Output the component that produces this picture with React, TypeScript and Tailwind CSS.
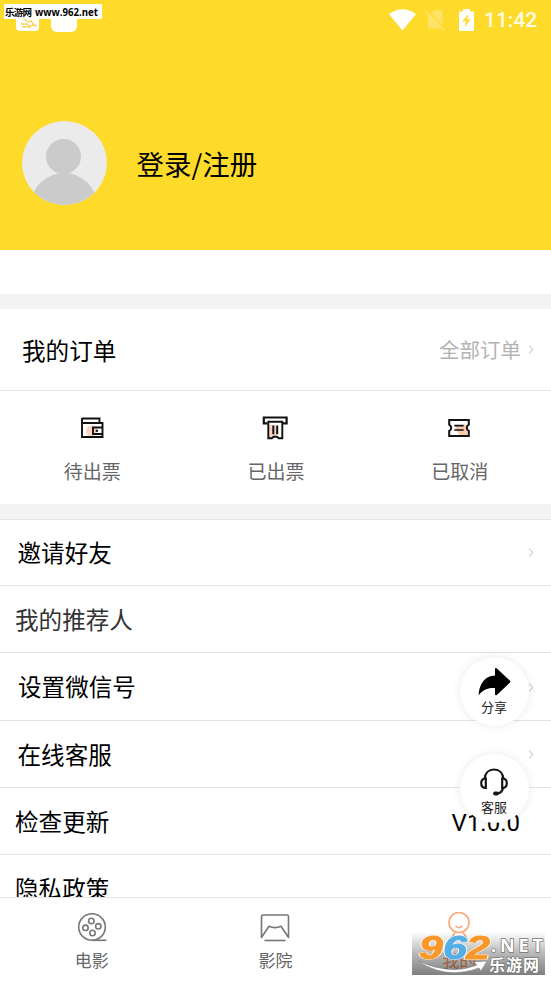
import React from 'react';

const WalletIcon = () => (
  <svg width="24" height="22" viewBox="0 0 24 22" fill="none">
    <circle cx="11.5" cy="14" r="5.5" fill="#fcd5c2" />
    <path d="M2 1.500h17.500v4.500M2 1v19h20.500V6H2" stroke="#111" strokeWidth="1.900" />
    <path d="M22.500 10.500h-9.500v6.500h9.500" stroke="#111" strokeWidth="1.900" />
    <path d="M15.700 12.700h2.200v2.200h-2.200z" fill="#111" />
  </svg>
);

const PrinterIcon = () => (
  <svg width="26" height="24" viewBox="0 0 26 24" fill="none">
    <path d="M6.500 9h7l3 7-3 5h-7z" fill="#fcd5c2" />
    <path d="M5.500 7.300H1.800V1.500h22.800v5.800h-4.100" stroke="#111" strokeWidth="2.200" />
    <path d="M6.300 5.800h14v16.400h-3.600l-1.700-1.500h-3.400l-1.700 1.500H6.300z" stroke="#111" strokeWidth="1.900" />
    <path d="M11.300 9.500v8.700M15.200 9.500v8.700" stroke="#111" strokeWidth="2" />
  </svg>
);

const TicketIcon = () => (
  <svg width="22" height="18" viewBox="0 0 22 18" fill="none">
    <path d="M8 6h11v10h-7.500C9 13 7.500 10 8 6z" fill="#fbc9ae" />
    <path
      d="M1.200 1h19.600v4.600c-1.600.8-2 1.800-2 3.200s.4 2.500 2 3.200v5H1.200v-5c1.600-.7 2-1.800 2-3.200s-.4-2.400-2-3.200z"
      stroke="#111"
      strokeWidth="2"
    />
    <path d="M6.300 6.700h9.400M6.300 11h9.400" stroke="#111" strokeWidth="1.700" />
  </svg>
);

const ReelIcon = () => (
  <svg width="30" height="30" viewBox="0 0 30 30" fill="none" stroke="#777" strokeWidth="1.600">
    <circle cx="15" cy="14" r="13.300" />
    <circle cx="14.300" cy="8" r="2.700" />
    <circle cx="21.300" cy="13.300" r="2.700" />
    <circle cx="8.500" cy="14.800" r="2.700" />
    <circle cx="15.500" cy="20" r="2.700" />
    <path d="M15 27.300h14.300" />
  </svg>
);

const CinemaIcon = () => (
  <svg width="30" height="28" viewBox="0 0 30 28" fill="none" stroke="#777" strokeWidth="1.600">
    <path d="M1.500 23.500V2.500q0-1.500 1.500-1.500h24q1.500 0 1.500 1.500v21l-7.500-11.300q-6 2.800-12 0z" strokeLinejoin="round" />
    <path d="M4.500 26.500h21" />
  </svg>
);

const UserIcon = () => (
  <svg width="30" height="32" viewBox="0 0 30 32" fill="none" stroke="#fca878" strokeWidth="1.600">
    <circle cx="15" cy="10.500" r="10" />
    <path d="M11.500 14q3.500 3.500 7 0M11 20.500l-4.500 7M19 20.500l4.500 7" />
  </svg>
);

const Chevron = () => (
  <svg width="6" height="9" viewBox="0 0 6 9" fill="none" stroke="#bbb" strokeWidth="1">
    <path d="M1 .7l4 3.800-4 3.800" />
  </svg>
);

const ShareIcon = () => (
  <svg width="33" height="28" viewBox="0 0 33 28">
    <path d="M17 .6q.8-1 1.900 0L32 12.700q.9.800 0 1.700L18.900 27q-1.900 1-1.900-1v-6C9.500 19.600 5 21.500.6 27.300 1 17 6 8 17 7.500z" />
  </svg>
);

const HeadsetIcon = () => (
  <svg width="28" height="28" viewBox="0 0 28 28" fill="none" stroke="#151515" strokeWidth="2.200">
    <path d="M4.700 11C5 5 8.800 1.500 14 1.500S23 5 23.300 11" />
    <path d="M5.800 10.500v9.500C2.600 20 1.200 18.300 1.200 15.300s1.400-4.800 4.600-4.800zM22.200 10.500v9.500c3.200 0 4.600-1.700 4.600-4.700s-1.400-4.800-4.600-4.800z" />
    <path d="M23 20c-.6 3.500-3 5.500-7 5.800" />
    <rect x="13.500" y="24" width="5" height="3" rx="1.500" fill="#151515" strokeWidth="1" />
  </svg>
);

const orders = [
  { icon: WalletIcon, title: '待出票' },
  { icon: PrinterIcon, title: '已出票' },
  { icon: TicketIcon, title: '已取消' }
];

const rows = [
  { title: '邀请好友', row: 'h-[66px] pl-[17.500px]', arrow: true },
  { title: '我的推荐人', row: 'h-[67px] pt-[2px] pl-[15px] text-[#333]' },
  { title: '设置微信号', row: 'h-[68px] pt-px pl-[18px]', arrow: true },
  { title: '在线客服', row: 'h-[67px] pt-px pl-[17.500px]', arrow: true },
  { title: '检查更新', row: 'h-[67px] pt-[2px] pl-[15px]', value: 'V1.0.0' },
  { title: '隐私政策', row: 'h-[68px] pl-[15px]' }
];

const tabs = [
  { icon: ReelIcon, title: '电影', color: 'text-[#666]' },
  { icon: CinemaIcon, title: '影院', color: 'text-[#666]' },
  { icon: UserIcon, title: '我的', color: 'text-[#fc9a68]' }
];

const StatusBar = () => (
  <div className="flex h-10 items-center justify-end pr-[13px]">
    <svg width="27" height="22" viewBox="0 0 27 22" fill="#fff">
      <path d="M0 5Q13.500-4.500 27 5L13.500 21.500z" />
    </svg>
    <svg className="ml-[9px]" width="22" height="23" viewBox="0 0 22 23" fill="none">
      <path d="M9 1.500h8.500v18H3V7z" fill="#ffe368" />
      <path d="M2 1l19 19.500" stroke="#fedb2b" strokeWidth="1.500" />
      <path d="M.5 2.500l18.500 19" stroke="#ffe368" strokeWidth="1.900" />
    </svg>
    <svg className="ml-[12px]" width="15" height="22" viewBox="0 0 15 22">
      <path d="M4 0h7v2.500h4V22H0V2.500h4z" fill="#fff" />
      <path d="M9.500 5L3 12.500h4L5.500 18l6.500-7.500H8z" fill="#fedb2b" />
    </svg>
    <span className="ml-[10px] w-[54px] whitespace-nowrap font-[Roboto] text-[21px] leading-none font-medium text-[#fffbe5]">11:42</span>
  </div>
);

const SiteLabel = () => (
  <div className="absolute top-1 left-1">
    <div className="absolute top-2 left-3 h-[19px] w-[23px] rounded-sm bg-white">
      <svg width="23" height="19" viewBox="0 0 23 19" fill="none" stroke="#fbd36b" strokeWidth="1.500">
        <path d="M8 7l4 3 3-1 3 4 3 1M5 12h6l2 2 5-1M6 15h9" />
      </svg>
    </div>
    <div className="absolute top-2 left-[47px] h-5 w-[26px] rounded-md bg-white" />
    <svg className="relative" width="98" height="15" viewBox="0 0 98 15">
      <path d="M0 0h98v15H0z" fill="#fff" />
      <text x="1" y="12" fontSize="9.500" fontWeight="700" fontFamily="'Noto Sans CJK SC', sans-serif" textLength="27">乐游网</text>
      <text x="31" y="12" fontSize="10" fontWeight="700" fontFamily="'Open Sans', sans-serif" textLength="63" lengthAdjust="spacingAndGlyphs">www.962.net</text>
    </svg>
  </div>
);

const digits = [
  { char: '9', x: 7, fill: '#f9982a' },
  { char: '6', x: 31, fill: '#56aee6' },
  { char: '2', x: 54, fill: '#f9982a' }
];

const SiteLogo = () => (
  <svg className="absolute right-[6px] bottom-[6px]" width="133" height="48" viewBox="0 0 133 48">
    <defs>
      <linearGradient id="shade" x2="0" y2="1">
        <stop stopColor="#000" stopOpacity="0" />
        <stop offset=".5" stopColor="#000" stopOpacity=".28" />
        <stop offset="1" stopColor="#000" stopOpacity=".5" />
      </linearGradient>
    </defs>
    <path d="M0 5h133v43H0z" fill="url(#shade)" />
    <g fontFamily="'Liberation Sans', sans-serif" fontWeight="700" fontStyle="italic" fontSize="33">
      {digits.map((digit) => (
        <text
          key={digit.char}
          x={digit.x}
          y="31.500"
          fill={digit.fill}
          stroke={digit.fill}
          strokeWidth=".9"
          strokeLinejoin="round"
          textLength="24"
          lengthAdjust="spacingAndGlyphs"
          className="[filter:drop-shadow(1px_0_0_#fff)_drop-shadow(-1px_0_0_#fff)]"
        >
          {digit.char}
        </text>
      ))}
    </g>
    <path d="M6 34q33 15 59 4l-3-3 13-1-6 10-2-3Q34 53 6 34z" fill="#fff" stroke="#777" strokeWidth=".5" />
    <g fill="#fff" stroke="#777" strokeWidth="1.500" paintOrder="stroke" fontWeight="700">
      <text x="79" y="25" fontSize="18" fontFamily="'Open Sans', sans-serif" textLength="52" lengthAdjust="spacing">.NET</text>
      <text x="77" y="44" fontSize="16" fontFamily="'Noto Sans CJK SC', sans-serif" textLength="50">乐游网</text>
    </g>
  </svg>
);

const App = () => {
  return (
    <div className="relative flex h-[981px] w-[551px] flex-col overflow-hidden bg-white font-['Noto_Sans_CJK_SC',sans-serif] text-black">
      <header className="h-[250px] shrink-0 bg-[#fedb2b]">
        <StatusBar />
        <div className="flex items-center pt-[81px] pl-[22px]">
          <svg width="85" height="84" viewBox="0 0 85 84">
            <clipPath id="avatar">
              <ellipse cx="42.500" cy="42" rx="42.500" ry="42" />
            </clipPath>
            <g clipPath="url(#avatar)">
              <path d="M0 0h85v84H0z" fill="#ebebeb" />
              <circle cx="41.500" cy="35.500" r="17.500" fill="#cbcbcb" />
              <ellipse cx="42" cy="84" rx="33" ry="32" fill="#cbcbcb" />
            </g>
          </svg>
          <span className="ml-[29.500px] text-[27.500px] leading-10">登录/注册</span>
        </div>
      </header>

      <div className="h-11 shrink-0" />

      <section className="shrink-0 border-y-[15px] border-[#f4f4f4]">
        <div className="flex h-[82px] items-center border-b border-[#e9e9e9] pr-[17px] pl-[22px]">
          <h2 className="pt-[2px] text-[23.600px]">我的订单</h2>
          <span className="mr-[7px] ml-auto text-[20.500px] text-[#b3b3b3]">全部订单</span>
          <Chevron />
        </div>
        <div className="grid h-[113px] grid-cols-3">
          {orders.map((order) => (
            <div key={order.title} className="flex flex-col items-center pt-6">
              <div className="flex h-[26px] items-center">
                <order.icon />
              </div>
              <span className="mt-4 pl-px text-[19px] leading-7 text-[#666]">{order.title}</span>
            </div>
          ))}
        </div>
      </section>

      <main className="min-h-0 flex-1 overflow-hidden">
        {rows.map((item) => (
          <div key={item.title} className={`flex items-center border-t border-[#e5e5e5] pr-[17px] text-[23.600px] ${item.row}`}>
            <span>{item.title}</span>
            <div className="ml-auto">
              {item.arrow && <Chevron />}
              {item.value && <span className="mr-[14px] font-[Roboto] text-[24px]">{item.value}</span>}
            </div>
          </div>
        ))}
      </main>

      <nav className="grid h-[84px] shrink-0 grid-cols-3 border-t border-[#e5e5e5] bg-white">
        {tabs.map((tab) => (
          <div key={tab.title} className="flex flex-col items-center pt-[14px]">
            <div className="flex h-[31px] items-center">
              <tab.icon />
            </div>
            <span className={`mt-[3px] text-[17px] leading-7 ${tab.color}`}>{tab.title}</span>
          </div>
        ))}
      </nav>

      {/* Floating actions */}
      <div className="absolute top-[657px] right-[22.500px] flex flex-col gap-7">
        <button className="flex h-[69px] w-[69px] flex-col items-center rounded-full bg-white pt-[11px] shadow-[0_0_10px_rgba(0,0,0,0.09)]">
          <ShareIcon />
          <span className="mt-px text-[13px] leading-5 text-[#222]">分享</span>
        </button>
        <button className="flex h-[69px] w-[69px] flex-col items-center rounded-full bg-white pt-[14px] shadow-[0_0_10px_rgba(0,0,0,0.09)]">
          <HeadsetIcon />
          <span className="mt-px text-[13px] leading-5 text-[#222]">客服</span>
        </button>
      </div>

      <SiteLabel />
      <SiteLogo />
    </div>
  );
};

export default App;
